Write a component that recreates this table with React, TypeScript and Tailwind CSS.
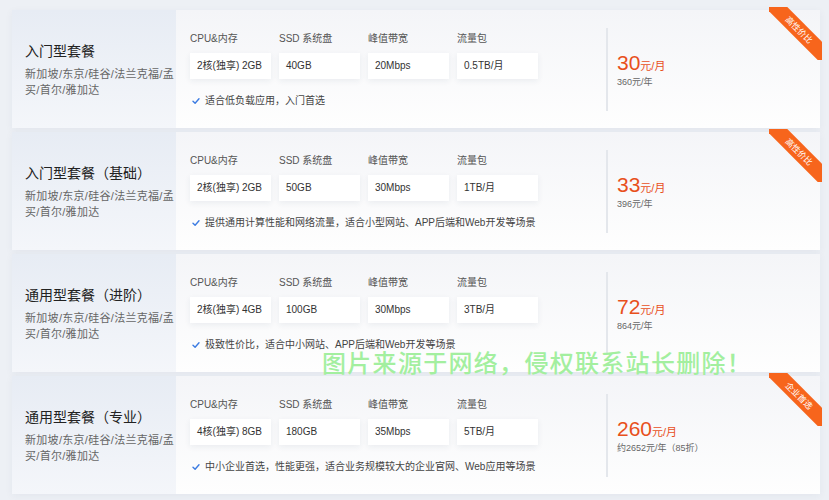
import React from 'react'

type Plan = {
  title: string
  specs: string[]
  note: string
  price: string
  year: string
  ribbon?: string
}

const labels = ['CPU&内存', 'SSD 系统盘', '峰值带宽', '流量包']

const plans: Plan[] = [
  {
    title: '入门型套餐',
    specs: ['2核(独享) 2GB', '40GB', '20Mbps', '0.5TB/月'],
    note: '适合低负载应用，入门首选',
    price: '30',
    year: '360元/年',
    ribbon: '高性价比',
  },
  {
    title: '入门型套餐（基础）',
    specs: ['2核(独享) 2GB', '50GB', '30Mbps', '1TB/月'],
    note: '提供通用计算性能和网络流量，适合小型网站、APP后端和Web开发等场景',
    price: '33',
    year: '396元/年',
    ribbon: '高性价比',
  },
  {
    title: '通用型套餐（进阶）',
    specs: ['2核(独享) 4GB', '100GB', '30Mbps', '3TB/月'],
    note: '极致性价比，适合中小网站、APP后端和Web开发等场景',
    price: '72',
    year: '864元/年',
  },
  {
    title: '通用型套餐（专业）',
    specs: ['4核(独享) 8GB', '180GB', '35Mbps', '5TB/月'],
    note: '中小企业首选，性能更强，适合业务规模较大的企业官网、Web应用等场景',
    price: '260',
    year: '约2652元/年（85折）',
    ribbon: '企业首选',
  },
]

function Ribbon({ text }: { text: string }) {
  return (
    <div className="absolute -top-[3px] -right-[2px] w-[53px] h-[53px] overflow-hidden">
      <div className="absolute left-[-11px] top-[15px] w-[82px] h-[16px] rotate-45 bg-[#f7651c] flex items-center justify-center text-white text-[8.5px] leading-none">
        {text}
      </div>
    </div>
  )
}

function Check() {
  return (
    <svg width="8" height="8" viewBox="0 0 8 8" className="shrink-0">
      <path d="M1 4.2 L3.1 6.2 L7 1.8" fill="none" stroke="#3b7be2" strokeWidth="1.4" strokeLinecap="round" strokeLinejoin="round" />
    </svg>
  )
}

function PlanCard({ plan }: { plan: Plan }) {
  return (
    <div className="relative flex h-[118px] bg-white shadow-[0_2px_8px_rgba(40,60,100,0.05)]">
      {/* left title panel */}
      <div className="w-[164px] shrink-0 flex flex-col justify-center pl-[13px] bg-gradient-to-b from-[#e7ecf4] to-[#f4f6fa]">
        <div className="text-[14px] leading-[20px] text-[#222]">{plan.title}</div>
        <div className="mt-[5px] text-[11px] leading-[16px] text-[#666] tracking-[0.3px] whitespace-nowrap">
          <div>新加坡/东京/硅谷/法兰克福/孟</div>
          <div>买/首尔/雅加达</div>
        </div>
      </div>

      {/* specs + price */}
      <div className="flex-1 flex items-center bg-gradient-to-b from-[#f4f5f8] to-[#fefefe]">
        <div className="w-[430px] shrink-0 pl-[14px] flex flex-col">
          <div className="flex gap-[8px]">
            {labels.map((l) => (
              <div key={l} className="w-[81px] text-[10px] leading-[14px] text-[#555]">
                {l}
              </div>
            ))}
          </div>
          <div className="mt-[7px] flex gap-[8px]">
            {plan.specs.map((s, i) => (
              <div
                key={i}
                className="w-[81px] h-[26px] flex items-center px-[7px] bg-white text-[10px] text-[#333] shadow-[0_2px_6px_rgba(30,50,90,0.07)]"
              >
                {s}
              </div>
            ))}
          </div>
          <div className="mt-[16px] h-[12px] flex items-center gap-[5px] pl-[2px] text-[10px] text-[#444]">
            <Check />
            <span>{plan.note}</span>
          </div>
        </div>

        <div className="w-[2px] h-[83px] bg-[#e4e7ec]" />

        <div className="pl-[9px] flex flex-col">
          <div className="flex items-baseline text-[#e8501c]">
            <span className="text-[21px] leading-[24px]">{plan.price}</span>
            <span className="text-[11px]">元/月</span>
          </div>
          <div className="mt-[1px] text-[9px] leading-[12px] text-[#666]">{plan.year}</div>
        </div>
      </div>

      {plan.ribbon && <Ribbon text={plan.ribbon} />}
    </div>
  )
}

export default function App() {
  return (
    <div
      className="relative w-[829px] h-[500px] overflow-hidden bg-[#edf0f5] pt-[10px] pl-[12px] pr-[9px]"
      style={{ fontFamily: '"Liberation Sans", "Noto Sans CJK SC", sans-serif' }}
    >
      <div className="flex flex-col gap-[4px]">
        {plans.map((p) => (
          <PlanCard key={p.title} plan={p} />
        ))}
      </div>

      {/* watermark */}
      <div
        className="absolute left-[322px] top-[347px] text-[24px] leading-[30px] font-medium tracking-[1.3px] text-[#a3ef9f] whitespace-nowrap"
        style={{ fontFamily: '"Noto Sans CJK SC", sans-serif' }}
      >
        图片来源于网络，侵权联系站长删除！
      </div>
    </div>
  )
}
